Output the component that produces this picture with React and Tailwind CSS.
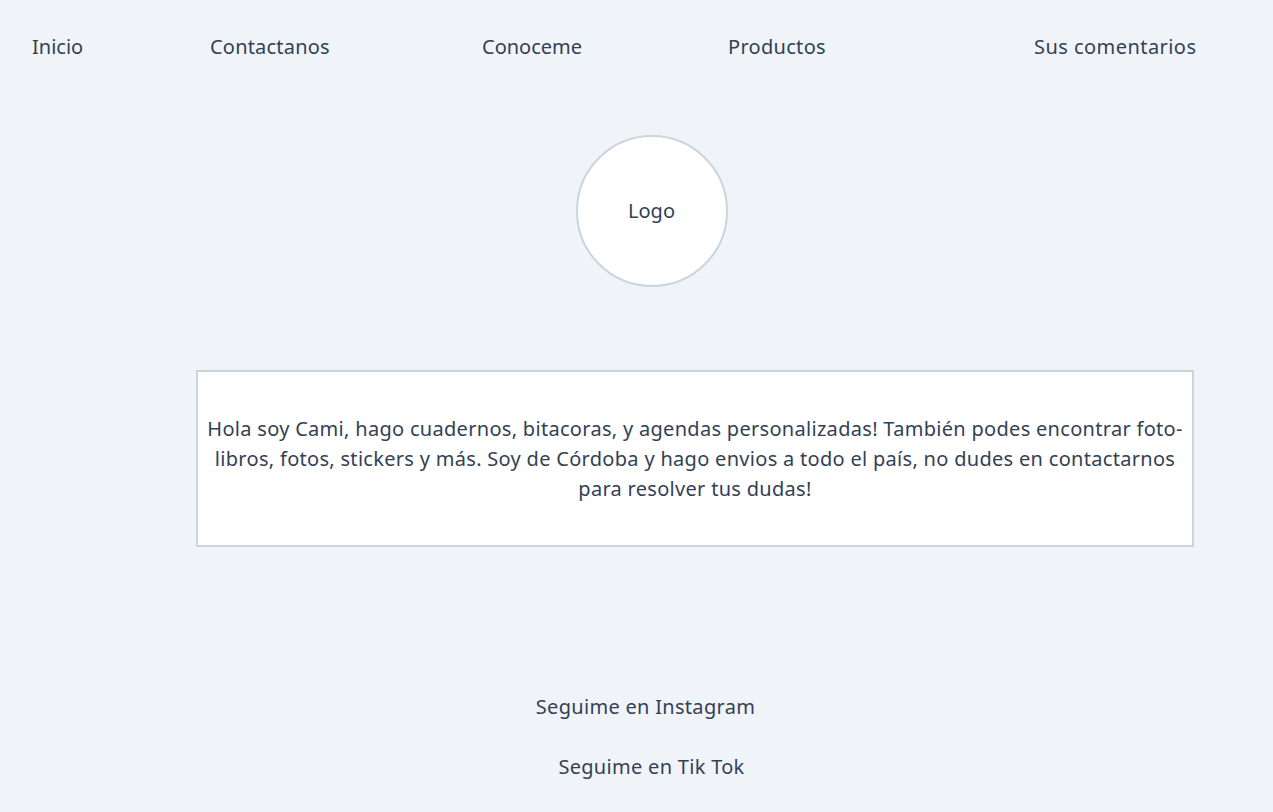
export default function App() {
  const font = { fontFamily: '"Noto Sans", "Open Sans", sans-serif' };
  return (
    <div className="min-h-[812px] w-full bg-[#f0f4f8] text-[#334155] text-[20px] leading-[30px] tracking-[0.3px]" style={font}>
      <nav className="flex items-center pl-8 pt-8">
        <a className="w-[178px] shrink-0 tracking-normal">Inicio</a>
        <a className="w-[272px] shrink-0 tracking-[0.2px]">Contactanos</a>
        <a className="w-[246px] shrink-0 tracking-normal">Conoceme</a>
        <a className="w-[306px] shrink-0">Productos</a>
        <a className="shrink-0 tracking-[0.45px]">Sus comentarios</a>
      </nav>
      <div className="flex justify-center pl-[30px] mt-[73px]">
        <div className="w-[152px] h-[152px] rounded-full bg-white border-2 border-[#c9d5e0] flex items-center justify-center tracking-normal">
          Logo
        </div>
      </div>
      <div className="mt-[83px] ml-[196px] w-[998px] h-[177px] bg-white border-2 border-[#c9d5e0] flex items-center justify-center text-center px-2">
        <p>
          Hola soy Cami, hago cuadernos, bitacoras, y agendas personalizadas! También podes encontrar foto-
          <br />
          libros, fotos, stickers y más. Soy de Córdoba y hago envios a todo el país, no dudes en contactarnos
          <br />
          para resolver tus dudas!
        </p>
      </div>
      <div className="mt-[145px] flex flex-col items-center gap-[30px] pl-[30px]">
        <a className="pr-[12px]">Seguime en Instagram</a>
        <a>Seguime en Tik Tok</a>
      </div>
    </div>
  );
}
